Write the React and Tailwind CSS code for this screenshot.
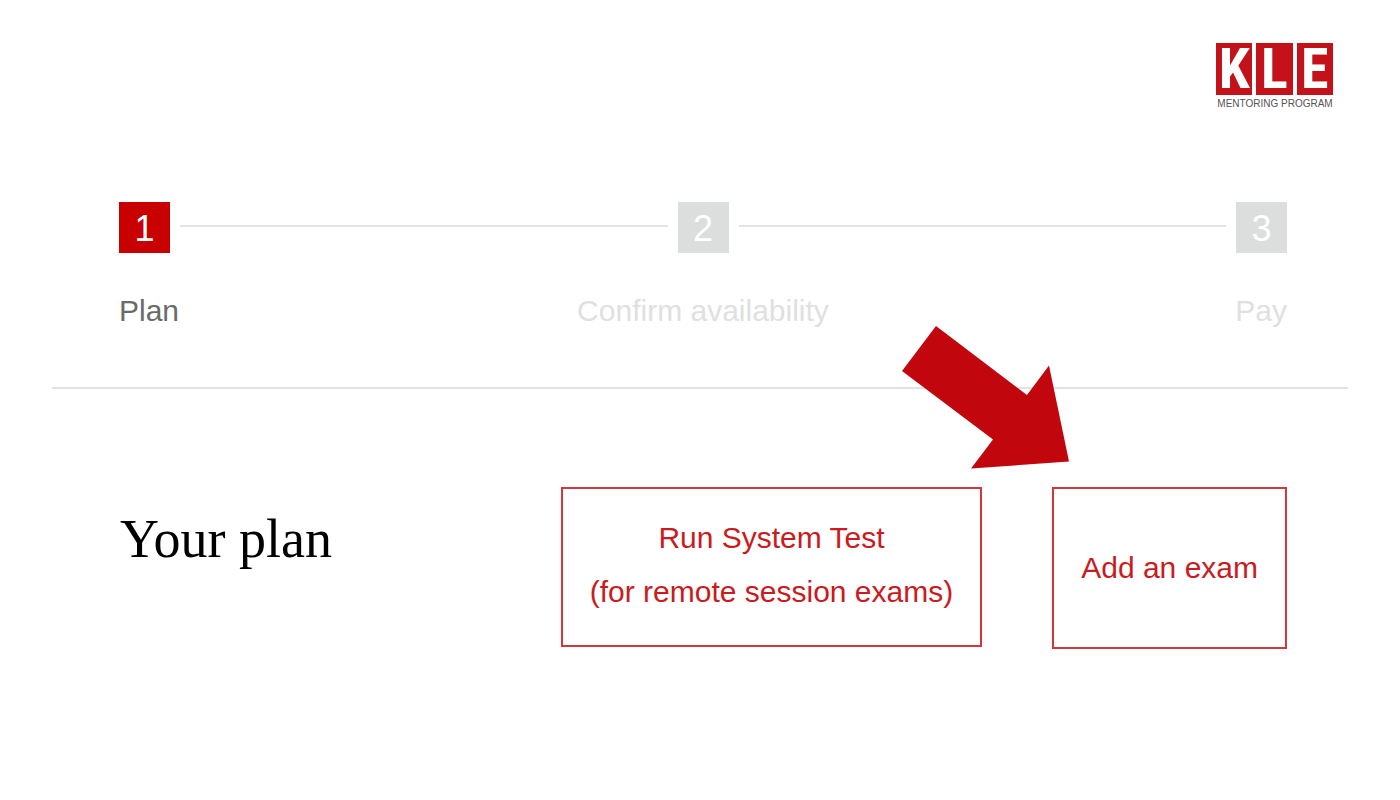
const steps = [
  { number: 1, label: 'Plan', active: true },
  { number: 2, label: 'Confirm availability', active: false },
  { number: 3, label: 'Pay', active: false },
];

function Logo() {
  return (
    <div className="flex w-[118px] flex-col items-center">
      <div className="flex w-full gap-1 pr-px font-['Liberation_Sans_Narrow','Roboto_Condensed','Liberation_Sans',sans-serif] text-[56px] leading-[52px] font-bold text-white">
        {['K', 'L', 'E'].map((letter) => (
          <span key={letter} className="flex h-[52px] flex-1 justify-center bg-[#c4121a]">
            {letter}
          </span>
        ))}
      </div>
      <p className="mt-[3px] text-[10px] leading-3 whitespace-nowrap text-[#555]">
        MENTORING PROGRAM
      </p>
    </div>
  );
}

function StepLine() {
  return <span aria-hidden="true" className="h-[25px] flex-1 border-b-2 border-[#e4e4e4]" />;
}

function StepBox({ step }) {
  return (
    <span
      className={
        step.active
          ? 'flex size-[51px] items-center justify-center bg-[#c80000] pt-0.5 text-4xl text-white'
          : 'flex size-[51px] items-center justify-center bg-[#dcdedd] pt-0.5 text-4xl text-white'
      }
    >
      {step.number}
    </span>
  );
}

function Stepper() {
  return (
    <nav aria-label="Progress">
      <div className="flex items-start gap-[10px]">
        <StepBox step={steps[0]} />
        <StepLine />
        <StepBox step={steps[1]} />
        <StepLine />
        <StepBox step={steps[2]} />
      </div>
      <ol className="mt-10 grid grid-cols-3 text-[30px] leading-9 text-[#dfe0e0]">
        <li className="text-[#6a6a6a]" aria-current="step">{steps[0].label}</li>
        <li className="text-center">{steps[1].label}</li>
        <li className="text-right">{steps[2].label}</li>
      </ol>
    </nav>
  );
}

function Arrow() {
  return (
    <svg
      aria-hidden="true"
      viewBox="0 0 167 143"
      className="pointer-events-none absolute right-[218px] bottom-full mb-[18px] h-[143px] w-[167px]"
    >
      <path d="M34 0 125 69 147 39.500 167 135.500 69 142.500 91 113.500 0 45Z" fill="#c1060d" />
    </svg>
  );
}

export default function App() {
  return (
    <div className="min-h-screen bg-white px-[52px] font-['Liberation_Sans',Arial,sans-serif]">
      <header className="flex justify-end pt-[43px] pr-[14px]">
        <Logo />
      </header>
      <main>
        <section className="border-b-2 border-[#e2e2e2] pt-[92px] pr-[61px] pb-[58px] pl-[67px]">
          <Stepper />
        </section>
        <section className="flex items-start justify-between pt-[98px] pr-[61px] pl-[68px]">
          <h1 className="pt-5 font-['Liberation_Serif','Times_New_Roman',serif] text-[54px] leading-[64px] text-black">
            Your plan
          </h1>
          <div className="flex items-start gap-[70px] text-[30px] leading-[54px] text-[#cb1a20]">
            <button type="button" className="border-2 border-[#d2373b] px-[27px] pt-[22px] pb-[26px]">
              Run System Test
              <br />
              (for remote session exams)
            </button>
            <div className="relative">
              <button type="button" className="border-2 border-[#d2373b] px-[27px] py-[52px]">
                Add an exam
              </button>
              <Arrow />
            </div>
          </div>
        </section>
      </main>
    </div>
  );
}
